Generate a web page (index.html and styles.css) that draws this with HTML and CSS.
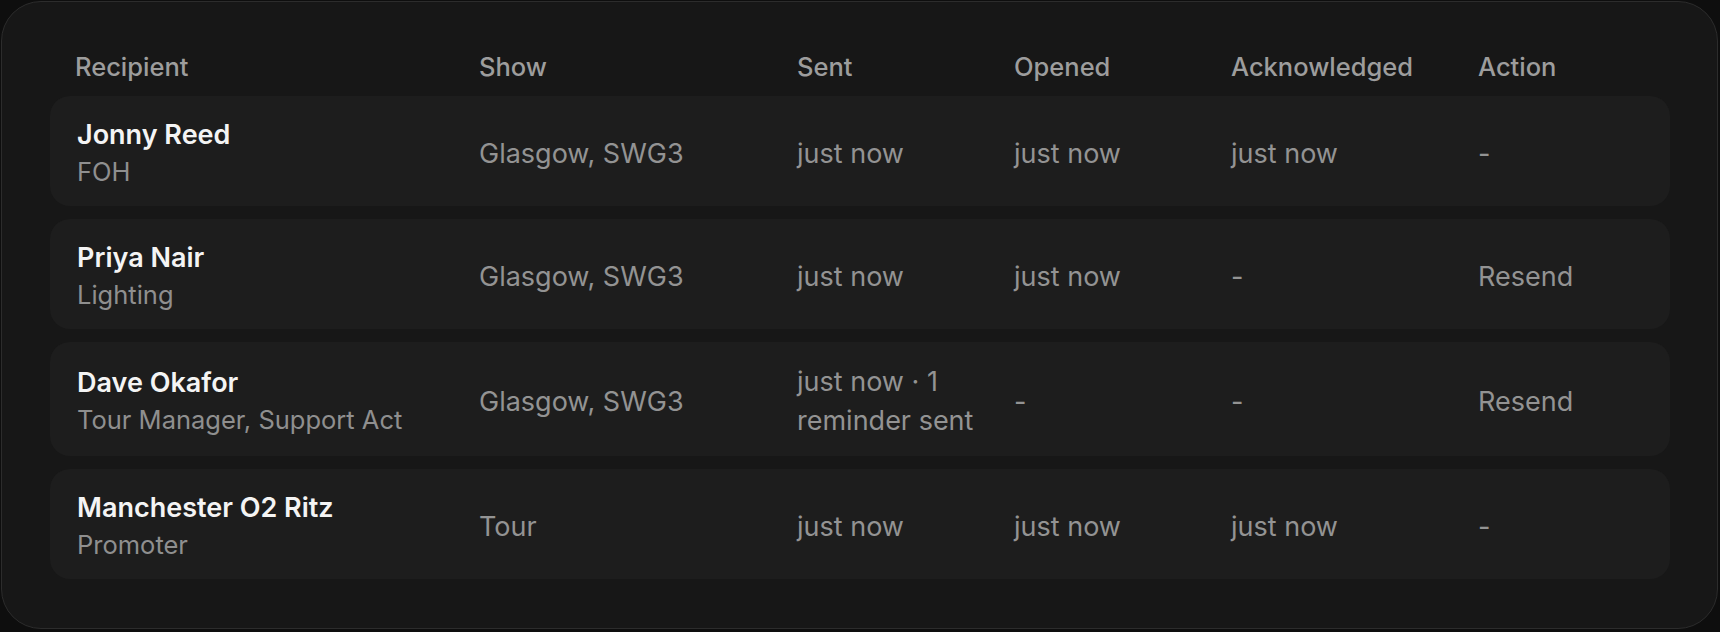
FILE: index.html
```html
<!DOCTYPE html>
<html lang="en">
<head>
<meta charset="utf-8">
<title>Recipients</title>
<link rel="stylesheet" href="styles.css">
</head>
<body>
<div class="card">
  <div class="grid head">
    <div class="th">Recipient</div>
    <div class="th">Show</div>
    <div class="th">Sent</div>
    <div class="th">Opened</div>
    <div class="th">Acknowledged</div>
    <div class="th">Action</div>
  </div>
  <div class="rows">
    <div class="grid row">
      <div class="who"><div class="name">Jonny Reed</div><div class="role">FOH</div></div>
      <div class="val">Glasgow, SWG3</div>
      <div class="val">just now</div>
      <div class="val">just now</div>
      <div class="val">just now</div>
      <div class="val">-</div>
    </div>
    <div class="grid row">
      <div class="who"><div class="name">Priya Nair</div><div class="role">Lighting</div></div>
      <div class="val">Glasgow, SWG3</div>
      <div class="val">just now</div>
      <div class="val">just now</div>
      <div class="val">-</div>
      <div class="val">Resend</div>
    </div>
    <div class="grid row">
      <div class="who"><div class="name">Dave Okafor</div><div class="role">Tour Manager, Support Act</div></div>
      <div class="val">Glasgow, SWG3</div>
      <div class="val">just now · 1 reminder sent</div>
      <div class="val">-</div>
      <div class="val">-</div>
      <div class="val">Resend</div>
    </div>
    <div class="grid row">
      <div class="who"><div class="name">Manchester O2 Ritz</div><div class="role">Promoter</div></div>
      <div class="val">Tour</div>
      <div class="val">just now</div>
      <div class="val">just now</div>
      <div class="val">just now</div>
      <div class="val">-</div>
    </div>
  </div>
</div>
</body>
</html>
```
FILE: styles.css
```css
html, body {
  margin: 0;
  padding: 0;
  background: #0e0e0e;
}
body {
  padding: 1px;
  font-family: Inter, "Noto Sans", "Liberation Sans", sans-serif;
}
.card {
  box-sizing: border-box;
  width: 1717px;
  height: 628px;
  background: #171717;
  border: 1px solid #2c2c2c;
  border-radius: 40px;
  padding: 48px 47px 48px 48px;
}
.grid {
  display: grid;
  grid-template-columns: 402px 318px 217px 217px 247px 1fr;
  padding-left: 27px;
  padding-right: 20px;
}
.head {
  height: 34px;
  align-items: center;
  margin-bottom: 12px;
}
.th {
  color: #9d9d9d;
  font-size: 25.5px;
  font-weight: 500;
  line-height: 34px;
}
.th:first-child {
  margin-left: -2px;
}
.rows {
  display: flex;
  flex-direction: column;
  gap: 13px;
}
.row {
  background: #1d1d1d;
  border-radius: 20px;
  align-items: center;
  min-height: 110px;
  box-sizing: border-box;
  padding-top: 20px;
  padding-bottom: 16px;
}
.name {
  color: #f4f4f4;
  font-size: 27px;
  font-weight: 600;
  line-height: 38px;
}
.role {
  color: #8f8f8f;
  font-size: 25.5px;
  line-height: 36px;
}
.val {
  color: #939393;
  font-size: 27px;
  line-height: 39px;
  padding-right: 20px;
}
```
